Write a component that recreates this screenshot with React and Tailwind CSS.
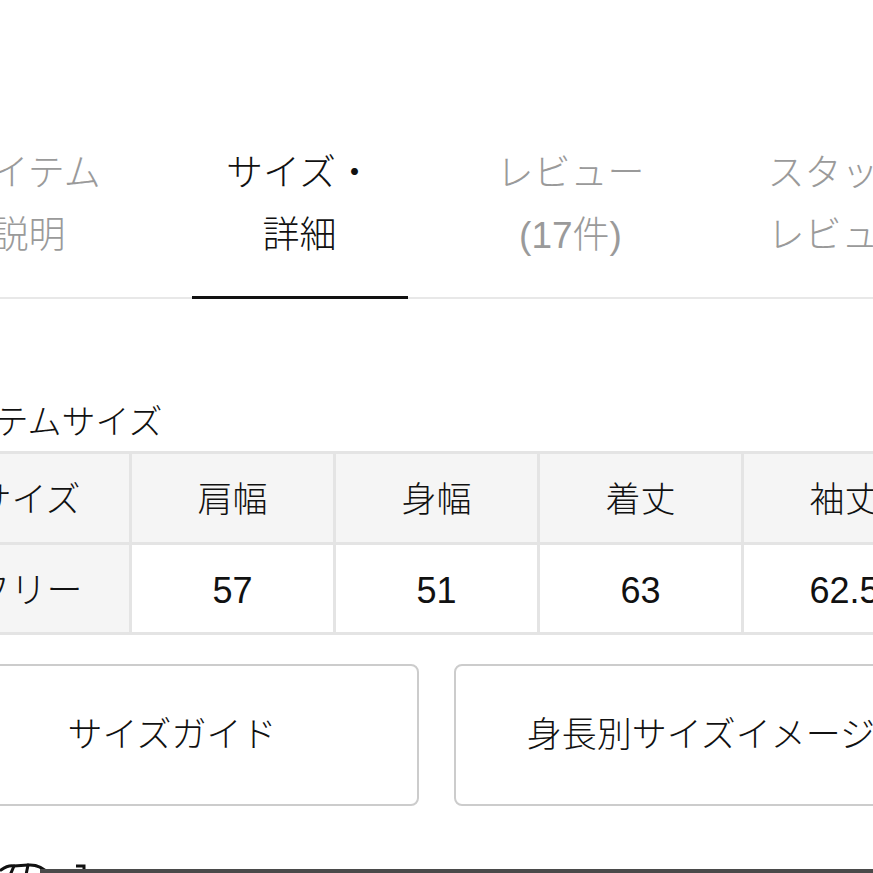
import React from 'react';

const tabs = [
    { lines: ['アイテム', '説明'], active: false },
    { lines: ['サイズ・', '詳細'], active: true },
    { lines: ['レビュー', '(17件)'], active: false },
    { lines: ['スタッフ', 'レビュー'], active: false },
];

const headers = ['サイズ', '肩幅', '身幅', '着丈', '袖丈', '裾幅'];
const values = ['フリー', '57', '51', '63', '62.5', '52'];

const font = { fontFamily: '"Liberation Sans", "Noto Sans CJK JP", sans-serif' };

const App = () => {
    return (
        <div className="relative w-[873px] h-[873px] overflow-hidden bg-white text-[#111] font-light" style={font}>
            {/* tab bar */}
            <div className="ml-[-107px] w-[1300px] pt-[143px] flex border-b-2 border-[#e8e8e8]">
                {tabs.map((t) => (
                    <div key={t.lines[0]} className="w-[271px] shrink-0 flex flex-col items-center">
                        <div className={`text-[37px] leading-[62px] text-center ${t.active ? 'text-[#111]' : 'text-[#9a9a9a]'}`}>
                            {t.lines.map((l) => (
                                <div key={l}>{l}</div>
                            ))}
                        </div>
                        <div className={`mt-[29px] mb-[-2px] h-[3px] w-[216px] ${t.active ? 'bg-[#111]' : 'bg-transparent'}`} />
                    </div>
                ))}
            </div>

            {/* size section */}
            <div className="ml-[-75px] w-[1300px]">
                <h3 className="mt-[99px] mb-[5px] text-[34px] leading-[48px] pl-[4px]">アイテムサイズ</h3>
                <table className="table-fixed border-collapse w-[1224px]">
                    <thead>
                        <tr>
                            {headers.map((h) => (
                                <th key={h} className="w-[204px] h-[91px] border-[3px] border-[#e4e4e4] bg-[#f5f5f5] text-[35px] font-light text-center pt-[4px]">
                                    {h}
                                </th>
                            ))}
                        </tr>
                    </thead>
                    <tbody>
                        <tr>
                            {values.map((v, i) => (
                                <td key={i} className={`h-[90px] border-[3px] border-[#e4e4e4] text-[36px] text-center pt-[4px] ${i === 0 ? 'bg-[#f5f5f5]' : 'bg-white'}`}>
                                    {v}
                                </td>
                            ))}
                        </tr>
                    </tbody>
                </table>

                <div className="mt-[29px] flex gap-[35px]">
                    <button className="w-[494px] h-[142px] shrink-0 rounded-[8px] border-2 border-[#cccccc] text-[35px] bg-white">
                        サイズガイド
                    </button>
                    <button className="w-[494px] h-[142px] shrink-0 rounded-[8px] border-2 border-[#cccccc] text-[35px] bg-white">
                        身長別サイズイメージ
                    </button>
                </div>

                <div className="mt-[54px] ml-[75px] flex items-start gap-[22px]">
                    <svg width="52" height="20" viewBox="0 0 52 20" fill="none" stroke="#111" strokeWidth="3" strokeLinecap="round">
                        <path d="M1 10 Q8 5 14 6 L28 5 Q42 4 50 16" />
                        <path d="M14 6 L8 20" />
                        <path d="M28 5 L25 20" />
                    </svg>
                    <svg width="14" height="20" viewBox="0 0 14 20" fill="none" stroke="#111" strokeWidth="3">
                        <path d="M2 6 H10 V20" />
                    </svg>
                </div>
            </div>

            {/* bottom bar edge */}
            <div className="absolute left-[40px] right-0 top-[869px] h-[4px] bg-[#4a4a4a]" />
        </div>
    );
};

export default App;
